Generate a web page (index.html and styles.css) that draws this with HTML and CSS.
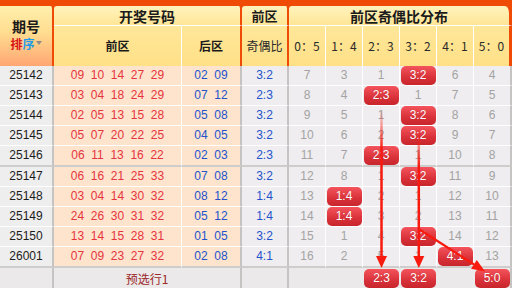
FILE: index.html
```html
<!DOCTYPE html>
<html lang="zh-CN">
<head>
<meta charset="utf-8">
<title>前区奇偶比分布</title>
<link rel="stylesheet" href="styles.css">
</head>
<body>
<div class="board">
  <table class="chart">
    <colgroup>
      <col class="c-issue"><col class="c-front"><col class="c-back"><col class="c-ratio">
      <col class="c-dist"><col class="c-dist"><col class="c-dist"><col class="c-dist"><col class="c-dist"><col class="c-dist-last">
    </colgroup>
    <thead>
      <tr class="h1">
        <th rowspan="2" class="issue-h">
          <div class="t-issue">期号</div>
          <div class="sort"><span class="s1">排</span><span class="s2">序</span><span class="caret"></span></div>
        </th>
        <th colspan="2" class="sep nl">开奖号码</th>
        <th class="sep mid nl">前区</th>
        <th colspan="6" class="end nl">前区奇偶比分布</th>
      </tr>
      <tr class="h2">
        <th class="wl bold">前区</th>
        <th class="sep bold">后区</th>
        <th class="sep">奇偶比</th>
        <th class="wl">0：5</th>
        <th class="wl">1：4</th>
        <th class="wl">2：3</th>
        <th class="wl">3：2</th>
        <th class="wl">4：1</th>
        <th class="end">5：0</th>
      </tr>
    </thead>
    <tbody>
      <tr>
        <td class="issue">25142</td><td class="front">09  10  14  27  29</td><td class="back">02  09</td><td class="ratio">3:2</td>
        <td class="d">7</td><td class="d">3</td><td class="d">1</td><td class="d"><span class="b">3:2</span></td><td class="d">6</td><td class="d last">4</td>
      </tr>
      <tr>
        <td class="issue">25143</td><td class="front">03  04  18  24  29</td><td class="back">07  12</td><td class="ratio">2:3</td>
        <td class="d">8</td><td class="d">4</td><td class="d"><span class="b">2:3</span></td><td class="d">1</td><td class="d">7</td><td class="d last">5</td>
      </tr>
      <tr>
        <td class="issue">25144</td><td class="front">02  05  13  15  28</td><td class="back">05  08</td><td class="ratio">3:2</td>
        <td class="d">9</td><td class="d">5</td><td class="d">1</td><td class="d"><span class="b">3:2</span></td><td class="d">8</td><td class="d last">6</td>
      </tr>
      <tr>
        <td class="issue">25145</td><td class="front">05  07  20  22  25</td><td class="back">04  05</td><td class="ratio">3:2</td>
        <td class="d">10</td><td class="d">6</td><td class="d">2</td><td class="d"><span class="b">3:2</span></td><td class="d">9</td><td class="d last">7</td>
      </tr>
      <tr class="brk">
        <td class="issue">25146</td><td class="front">06  11  13  16  22</td><td class="back">02  03</td><td class="ratio">2:3</td>
        <td class="d">11</td><td class="d">7</td><td class="d"><span class="b">2:3</span></td><td class="d">1</td><td class="d">10</td><td class="d last">8</td>
      </tr>
      <tr>
        <td class="issue">25147</td><td class="front">06  16  21  25  33</td><td class="back">07  08</td><td class="ratio">3:2</td>
        <td class="d">12</td><td class="d">8</td><td class="d">1</td><td class="d"><span class="b">3:2</span></td><td class="d">11</td><td class="d last">9</td>
      </tr>
      <tr>
        <td class="issue">25148</td><td class="front">03  04  14  30  32</td><td class="back">08  12</td><td class="ratio">1:4</td>
        <td class="d">13</td><td class="d"><span class="b">1:4</span></td><td class="d">2</td><td class="d">1</td><td class="d">12</td><td class="d last">10</td>
      </tr>
      <tr>
        <td class="issue">25149</td><td class="front">24  26  30  31  32</td><td class="back">05  12</td><td class="ratio">1:4</td>
        <td class="d">14</td><td class="d"><span class="b">1:4</span></td><td class="d">3</td><td class="d">2</td><td class="d">13</td><td class="d last">11</td>
      </tr>
      <tr>
        <td class="issue">25150</td><td class="front">13  14  15  28  31</td><td class="back">01  05</td><td class="ratio">3:2</td>
        <td class="d">15</td><td class="d">1</td><td class="d">4</td><td class="d"><span class="b">3:2</span></td><td class="d">14</td><td class="d last">12</td>
      </tr>
      <tr class="brk2">
        <td class="issue">26001</td><td class="front">07  09  23  27  32</td><td class="back">02  08</td><td class="ratio">4:1</td>
        <td class="d">16</td><td class="d">2</td><td class="d">5</td><td class="d">1</td><td class="d"><span class="b">4:1</span></td><td class="d last">13</td>
      </tr>
      <tr class="foot">
        <td class="f-issue"></td>
        <td colspan="2" class="f-label">预选行1</td>
        <td class="f-ratio"></td>
        <td class="f-d"></td><td class="f-d"></td>
        <td class="f-d"><span class="b">2:3</span></td>
        <td class="f-d"><span class="b">3:2</span></td>
        <td class="f-d"></td>
        <td class="f-d last"><span class="b">5:0</span></td>
      </tr>
    </tbody>
  </table>
  <svg class="trend" width="512" height="288" viewBox="0 0 512 288" aria-hidden="true">
    <defs>
      <linearGradient id="fadeA" gradientUnits="userSpaceOnUse" x1="0" y1="108" x2="0" y2="150">
        <stop offset="0" stop-color="#f81a0e" stop-opacity="0"/>
        <stop offset="1" stop-color="#f81a0e" stop-opacity="1"/>
      </linearGradient>
      <linearGradient id="fadeB" gradientUnits="userSpaceOnUse" x1="0" y1="128" x2="0" y2="166">
        <stop offset="0" stop-color="#f81a0e" stop-opacity="0"/>
        <stop offset="1" stop-color="#f81a0e" stop-opacity="1"/>
      </linearGradient>
    </defs>
    <line x1="381.5" y1="108" x2="381.5" y2="258" stroke="url(#fadeA)" stroke-width="2.5"/>
    <polygon points="376,256 387,256 381.5,268" fill="#f81a0e"/>
    <line x1="418.8" y1="128" x2="418.8" y2="258" stroke="url(#fadeB)" stroke-width="2.5"/>
    <polygon points="413.3,256 424.3,256 418.8,268" fill="#f81a0e"/>
    <line x1="418.8" y1="229" x2="474" y2="264.5" stroke="#f81a0e" stroke-width="2.2"/>
    <polygon points="471,268.8 476.8,260 485,271.5" fill="#f81a0e"/>
  </svg>
</div>
</body>
</html>
```

FILE: styles.css
```css
* { box-sizing: border-box; }

html, body {
  margin: 0;
  padding: 0;
  background: #ffffff;
}

body {
  font-family: "Liberation Sans", Arial, "Noto Sans CJK SC", sans-serif;
  font-size: 12px;
}

.board {
  position: relative;
  width: 512px;
  padding-top: 6px;
  background: #ef4a06;
}

.chart {
  border-collapse: separate;
  border-spacing: 0;
  table-layout: fixed;
  width: 512px;
}

.c-issue { width: 54px; }
.c-front { width: 128px; }
.c-back { width: 60px; }
.c-ratio { width: 47px; }
.c-dist { width: 37px; }
.c-dist-last { width: 38px; }

/* ---------- header ---------- */
.chart th {
  padding: 0;
  font-family: "Noto Sans CJK SC", "Liberation Sans", sans-serif;
  color: #1a1a1a;
  white-space: nowrap;
}

.h1 { height: 20px; }
.h2 { height: 40px; }

.h1 th {
  background: linear-gradient(#fff3bd, #ffe696);
  border-bottom: 1px solid #ffffff;
  font-size: 14px;
  font-weight: bold;
  line-height: 18px;
}

.h1 th.mid { font-size: 13px; }

.h1 th.nl { border-top-left-radius: 3px; }
.h1 th.sep { border-top-right-radius: 3px; }
.h1 th.end { border-top-right-radius: 7px; }

.h2 th {
  background: linear-gradient(#ffe799, #ffe087);
  font-size: 12px;
  font-weight: normal;
  line-height: 16px;
  color: #2a2a2a;
}

.h2 th.bold { font-weight: bold; color: #1a1a1a; }

.h1 th.issue-h {
  background: linear-gradient(#fff0ad 0%, #ffdc8f 45%, #ffa673 100%);
  border-bottom: 0;
  border-right: 2px solid #ef4a06;
  border-top-right-radius: 3px;
  padding-bottom: 3px;
  vertical-align: middle;
}

.t-issue {
  font-size: 14px;
  line-height: 17px;
}

.sort {
  font-size: 12px;
  line-height: 17px;
  display: flex;
  justify-content: center;
  align-items: center;
}

.s1 { color: #d81616; }
.s2 { color: #1c9be8; }

.caret {
  width: 0;
  height: 0;
  margin-left: 1px;
  border-left: 3.5px solid transparent;
  border-right: 3.5px solid transparent;
  border-top: 4px solid #8c8c8c;
}

.chart th.sep { border-right: 2px solid #ef4a06; }
.chart th.end { border-right: 3px solid #ef4a06; }
.chart th.wl { border-right: 1px solid #ffffff; }

/* ---------- body ---------- */
.chart tbody tr { height: 20px; }
.chart tbody tr.brk { height: 21px; }
.chart tbody tr.foot { height: 21px; }

.chart td {
  padding: 0;
  text-align: center;
  vertical-align: middle;
  border-bottom: 1px solid #ffffff;
  line-height: 19px;
  white-space: pre;
}

.chart tr.brk td,
.chart tr.brk2 td { border-bottom: 2px solid #cfcccc; }

.issue {
  background: #efeeee;
  color: #1c1c1c;
  border-right: 2px solid #c6c3c3;
}

.front {
  background: #fee4cd;
  color: #e6343d;
  border-right: 1px solid #ffffff;
}

.back {
  background: #fee4cd;
  color: #2253cc;
  border-right: 2px solid #c6c3c3;
}

.ratio {
  background: #efedef;
  color: #2253cc;
  border-right: 2px solid #c6c3c3;
}

.d {
  background: #efedef;
  color: #a3a3a3;
  border-right: 1px solid #ffffff;
}

.chart td.last { border-right: 2px solid #c6c3c3; }

.b {
  display: block;
  width: 35px;
  height: 19px;
  margin: 0 auto;
  border-radius: 5px;
  background: linear-gradient(#f4545c, #d93139 60%, #c8252c);
  color: #ffffff;
  line-height: 19px;
  font-size: 12px;
  text-shadow: 0 0 1px rgba(120, 0, 0, 0.35);
}

/* ---------- footer ---------- */
.foot td {
  background: #ebe9e9;
  border-bottom: 0;
  vertical-align: top;
  padding-top: 1px;
}

.foot .f-issue { border-right: 2px solid #c6c3c3; }

.foot .f-label {
  color: #9b2727;
  font-family: "Noto Sans CJK SC", "Liberation Sans", sans-serif;
  font-size: 12px;
  line-height: 19px;
  border-right: 2px solid #c6c3c3;
}

.foot .f-ratio { border-right: 2px solid #c6c3c3; }

/* ---------- trend overlay ---------- */
.trend {
  position: absolute;
  left: 0;
  top: 0;
  pointer-events: none;
}
```
